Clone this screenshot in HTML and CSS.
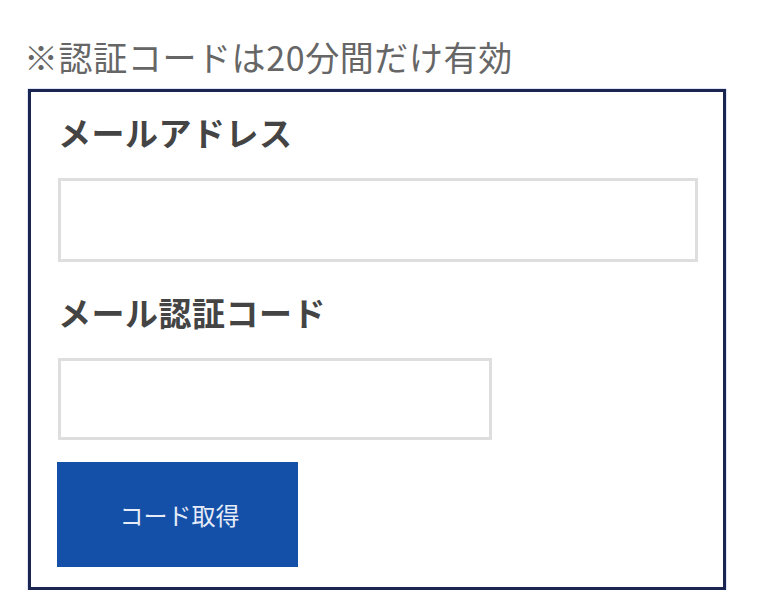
FILE: index.html
```html
<!DOCTYPE html>
<html lang="ja">
<head>
<meta charset="utf-8">
<link rel="stylesheet" href="styles.css">
</head>
<body>
<div class="page">
  <p class="note">※認証コードは20分間だけ有効</p>
  <div class="card">
    <label class="label" for="email">メールアドレス</label>
    <input class="field field-wide" id="email" type="text">
    <label class="label label-second" for="code">メール認証コード</label>
    <input class="field field-narrow" id="code" type="text">
    <button class="btn" type="button">コード取得</button>
  </div>
</div>
</body>
</html>
```

FILE: styles.css
```css
html, body {
  margin: 0;
  padding: 0;
  background: #ffffff;
}
body {
  font-family: "Noto Sans CJK JP", "Noto Sans", sans-serif;
}
.page {
  padding: 35px 32px 0 28px;
  width: 698px;
}
.note {
  margin: 0 0 11px -4px;
  font-size: 34px;
  line-height: 43px;
  color: #666666;
  letter-spacing: 0.6px;
}
.card {
  box-sizing: border-box;
  width: 698px;
  height: 501px;
  border: 3px solid #1b2552;
  padding: 20px 0 0 27px;
  display: flex;
  flex-direction: column;
  align-items: flex-start;
  box-shadow: 0 0 1px #3b5fc0;
}
.label {
  display: block;
  font-size: 33px;
  line-height: 40px;
  font-weight: 700;
  color: #444444;
  margin: 0 0 26px 0;
  letter-spacing: 0.5px;
}
.label-second {
  margin-bottom: 26px;
}
.field {
  box-sizing: border-box;
  height: 84px;
  border: 3px solid #dedede;
  background: #ffffff;
  margin: 0 0 30px 0;
  padding: 0 12px;
  outline: none;
}
.field-wide {
  width: 640px;
}
.field-narrow {
  width: 434px;
  height: 82px;
  margin-bottom: 22px;
}
.btn {
  box-sizing: border-box;
  width: 241px;
  height: 105px;
  border: none;
  background: #1450a8;
  color: #e6ecf7;
  font-family: "Noto Sans CJK JP", "Noto Sans", sans-serif;
  font-size: 24px;
  padding: 0 0 0 4px;
  margin-left: -1px;
}
```
